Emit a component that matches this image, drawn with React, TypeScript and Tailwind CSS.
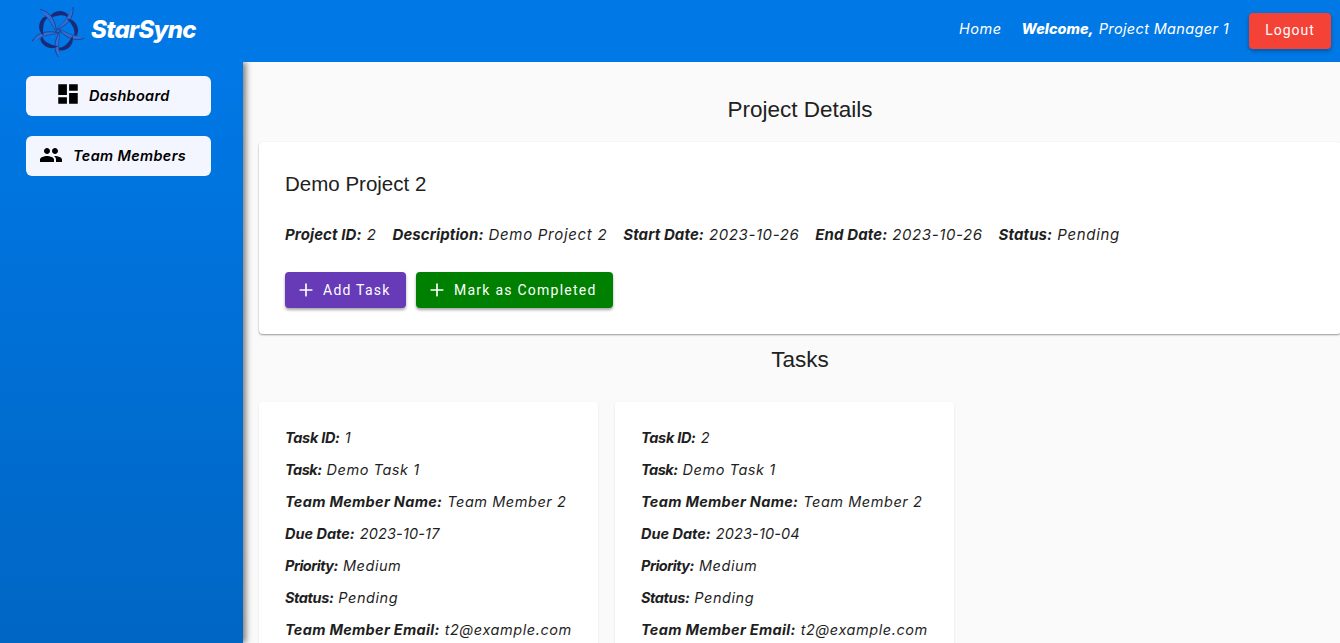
import { Plus } from "lucide-react";
import { MdDashboard, MdPeople } from "react-icons/md";

const tasks = [
  { id: 1, due: "2023-10-17" },
  { id: 2, due: "2023-10-04" },
];

function Logo() {
  const arms = [0, 72, 144, 216, 288];
  return (
    <svg width="52" height="52" viewBox="-26 -26 52 52" className="shrink-0">
      {arms.map((a) => (
        <g key={a} transform={`rotate(${a})`}>
          <path
            d="M-9 -12 C-7 -18 -1 -21 5 -19.5 C9 -18.5 11 -16 11 -12 C8 -15.5 5 -16 1 -15.5 C-3 -15 -6 -14 -9 -12Z"
            fill="#1b2a78"
          />
          <path d="M-2 -1 C3 -7 9 -11 11 -18 C14 -20 15 -22 15 -24 C16 -12 8 -5 -2 -1Z" fill="#2f6fd6" />
          <path d="M-2 -1 C8 -5 16 -12 15 -24" fill="none" stroke="#24408f" strokeWidth="0.9" />
          <path d="M-2 -1 C3 -7 9 -11 11 -18" fill="none" stroke="#24408f" strokeWidth="0.6" />
        </g>
      ))}
    </svg>
  );
}

function ProjectField({ label, value, valueClass = "tracking-[0.7px]" }: { label: string; value: string; valueClass?: string }) {
  return (
    <p className="text-[15px] italic leading-[32px] text-[#1f1f1f]">
      <b className="mr-[5px] font-bold tracking-[0.1px]">{label}:</b>
      <span className={valueClass}>{value}</span>
    </p>
  );
}

function Field({
  label,
  value,
  labelClass = "tracking-[0.3px]",
  valueClass = "tracking-[0.55px]",
}: {
  label: string;
  value: string;
  labelClass?: string;
  valueClass?: string;
}) {
  return (
    <p className="text-[14.5px] italic leading-[32px] text-[#1f1f1f]">
      <b className={`mr-[5px] font-bold ${labelClass}`}>{label}:</b>
      <span className={valueClass}>{value}</span>
    </p>
  );
}

function TaskCard({ id, due }: { id: number; due: string }) {
  return (
    <div className="h-[300px] w-[339px] shrink-0 rounded bg-white px-[26px] pt-5 shadow-[0_1px_3px_rgba(0,0,0,0.08)]">
      <Field label="Task ID" value={String(id)} labelClass="tracking-[-0.3px]" />
      <Field label="Task" value="Demo Task 1" labelClass="tracking-[-0.5px]" />
      <Field label="Team Member Name" value="Team Member 2" />
      <Field label="Due Date" value={due} labelClass="tracking-[0px]" valueClass="tracking-[0.15px]" />
      <Field label="Priority" value="Medium" labelClass="tracking-[-0.5px]" />
      <Field label="Status" value="Pending" labelClass="tracking-[-0.4px]" />
      <Field label="Team Member Email" value="t2@example.com" />
    </div>
  );
}

export default function App() {
  return (
    <div className="flex h-[643px] flex-col overflow-hidden bg-[#fafafa] font-['Inter',sans-serif]">
      <header className="z-20 flex h-[62px] shrink-0 items-center justify-between bg-[#0078e6] pl-[32px] pr-[9px]">
        <div className="flex items-center gap-[7px]">
          <Logo />
          <span className="pb-0.5 text-[24px] font-extrabold italic tracking-[-0.7px] text-white">StarSync</span>
        </div>
        <div className="flex items-center text-[14.5px] italic text-white">
          <span className="pb-[4px] tracking-[0.5px]">Home</span>
          <span className="ml-5 pb-[4px] font-extrabold">Welcome,</span>
          <span className="ml-[5px] pb-[4px] tracking-[0.35px]">Project Manager 1</span>
          <button className="ml-5 h-9 w-[82px] rounded bg-[#f44336] pb-[2px] font-['Roboto',sans-serif] text-sm not-italic tracking-[1px] shadow-[0_2px_4px_rgba(0,0,0,0.3)]">
            Logout
          </button>
        </div>
      </header>
      <div className="flex min-h-0 flex-1">
        <aside className="z-10 flex w-[243px] shrink-0 flex-col gap-5 bg-gradient-to-b from-[#0078e6] to-[#0066c4] pl-[26px] pt-3.5 shadow-[3px_0_6px_rgba(0,0,0,0.5)]">
          <a className="flex h-10 w-[185px] items-center gap-2 rounded-md bg-[#f4f6ff] pl-[29px] text-[14.5px] font-semibold italic tracking-[0.3px] text-black">
            <MdDashboard size={26} className="-mt-1" />
            <span>Dashboard</span>
          </a>
          <a className="flex h-10 w-[185px] items-center gap-2.5 rounded-md bg-[#f4f6ff] pl-[13px] text-[14.5px] font-semibold italic tracking-[0.35px] text-black">
            <MdPeople size={24} className="-mt-0.5" />
            <span>Team Members</span>
          </a>
        </aside>
        <main className="-mr-px min-w-0 flex-1 pl-4">
          <h1 className="mt-[33px] text-center font-['Liberation_Sans',sans-serif] text-[22.5px] leading-[30px] text-[#212121]">
            Project Details
          </h1>
          <section className="mt-[17px] h-[192px] rounded bg-white px-[26px] pt-[27px] shadow-[0_1px_2px_rgba(0,0,0,0.4)]">
            <h2 className="font-['Liberation_Sans',sans-serif] text-[20.5px] leading-[30px] text-[#212121]">Demo Project 2</h2>
            <div className="mt-[20px] flex gap-4">
              <ProjectField label="Project ID" value="2" />
              <ProjectField label="Description" value="Demo Project 2" />
              <ProjectField label="Start Date" value="2023-10-26" valueClass="tracking-[0.6px]" />
              <ProjectField label="End Date" value="2023-10-26" valueClass="tracking-[0.6px]" />
              <ProjectField label="Status" value="Pending" />
            </div>
            <div className="mt-[21px] flex gap-2.5 font-['Roboto',sans-serif] text-sm font-[450] tracking-[1.25px] text-white">
              <button className="flex h-9 w-[121px] items-center gap-[7px] rounded bg-[#673ab7] pl-[11px] shadow-[0_2px_3px_rgba(0,0,0,0.35)]">
                <Plus size={20} strokeWidth={2} />
                Add Task
              </button>
              <button className="flex h-9 w-[197px] items-center gap-[7px] rounded bg-[#008000] pl-[11px] shadow-[0_2px_3px_rgba(0,0,0,0.35)]">
                <Plus size={20} strokeWidth={2} />
                Mark as Completed
              </button>
            </div>
          </section>
          <h2 className="mt-[11px] text-center font-['Liberation_Sans',sans-serif] text-[22.5px] leading-[30px] text-[#212121]">
            Tasks
          </h2>
          <div className="mt-[27px] flex gap-[17px]">
            {tasks.map((t) => (
              <TaskCard key={t.id} id={t.id} due={t.due} />
            ))}
          </div>
        </main>
      </div>
    </div>
  );
}
